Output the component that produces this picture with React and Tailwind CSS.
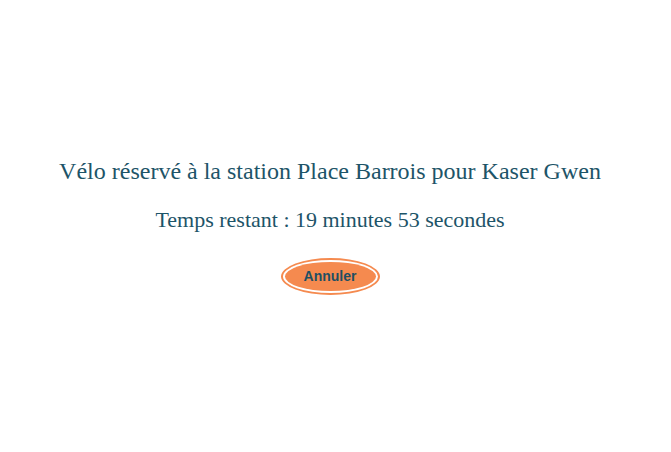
export default function App() {
  return (
    <div className="w-[660px] h-[452px] bg-white flex flex-col items-center pt-[157px]" style={{ fontFamily: '"Liberation Serif", serif' }}>
      <h1 className="text-[24px] leading-[28px] text-[#1d5468]">
        Vélo réservé à la station Place Barrois pour Kaser Gwen
      </h1>
      <p className="mt-[22px] text-[22px] leading-[26px] text-[#1d5468]">
        Temps restant : 19 minutes 53 secondes
      </p>
      <div className="mt-[25px] rounded-[50%] border-2 border-[#f58a4f] p-[2px]">
        <button
          className="w-[91px] h-[29px] rounded-[50%] bg-[#f58a4f] text-[14px] font-bold text-[#1d4f63]"
          style={{ fontFamily: '"Liberation Sans", Arial, sans-serif' }}
        >
          Annuler
        </button>
      </div>
    </div>
  );
}
